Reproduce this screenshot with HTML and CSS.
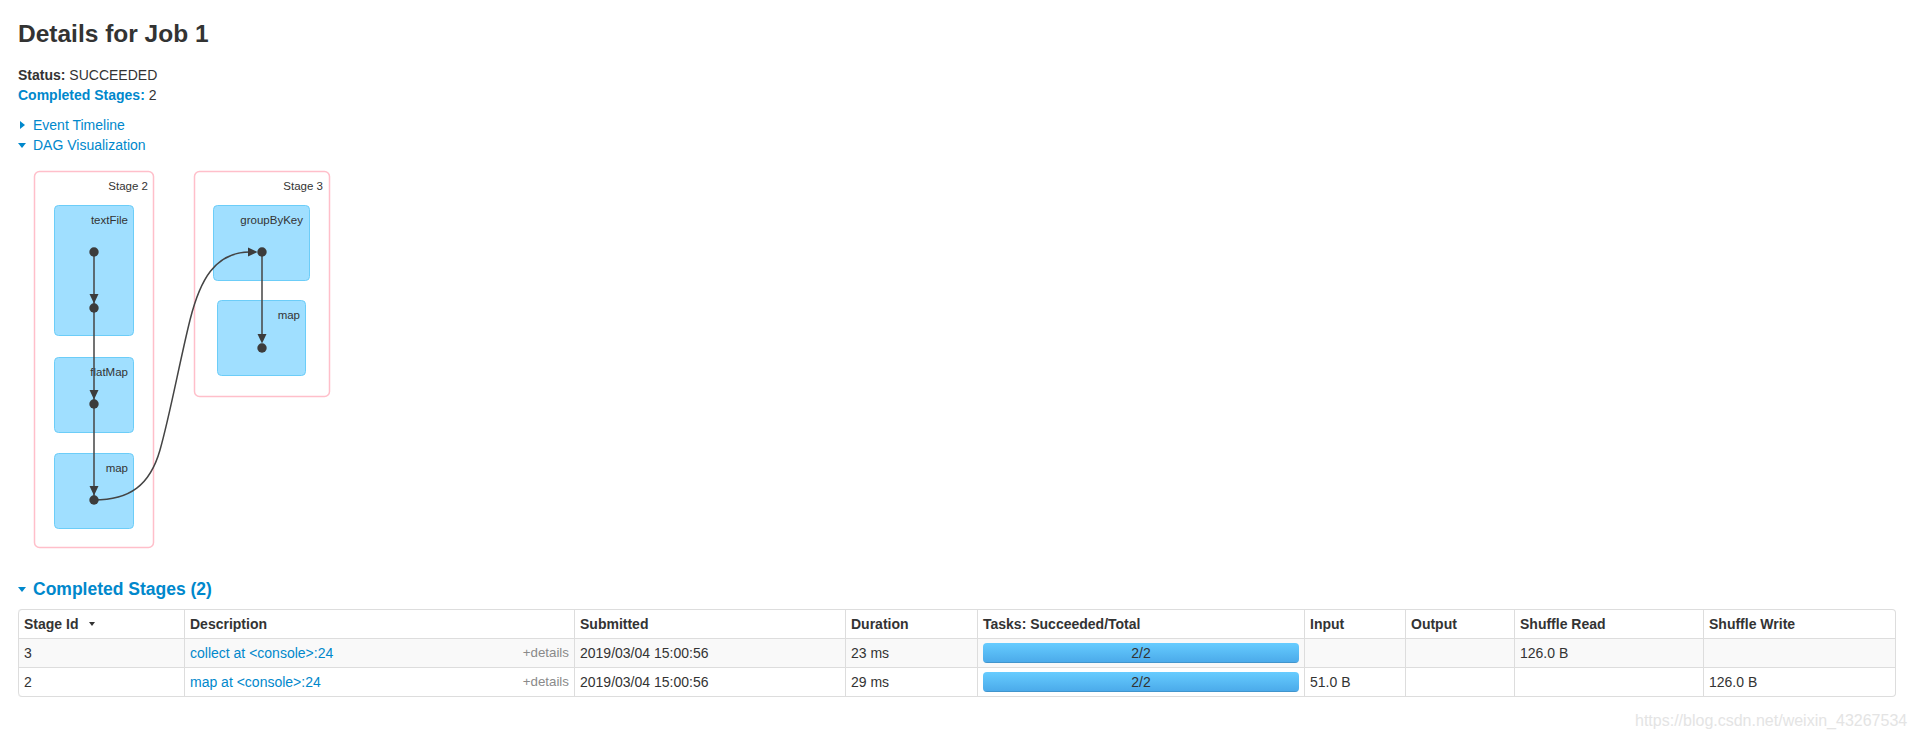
FILE: index.html
```html
<!DOCTYPE html>
<html lang="en">

<head>
    <meta charset="UTF-8">
    <meta name="viewport" content="width=device-width, initial-scale=1.0">
    <title>Details for Job 1</title>
    <link rel="stylesheet" href="styles.css">
</head>

<body>
    <div class="page">
        <h3 class="job-title">Details for Job 1</h3>

        <ul class="summary">
            <li><strong>Status:</strong> SUCCEEDED</li>
            <li><a href="#completed"><strong>Completed Stages:</strong></a> 2</li>
        </ul>

        <div class="toggles">
            <div class="toggle"><span class="arrow arrow-closed"></span><a href="#">Event Timeline</a></div>
            <div class="toggle"><span class="arrow arrow-open"></span><a href="#">DAG Visualization</a></div>
        </div>

        <!-- DAG: coordinates are page pixels, the viewBox starts where the svg sits -->
        <svg class="dag" width="330" height="414" viewBox="18 155 330 414">
            <rect class="stage" x="34.5" y="171.5" width="119" height="376" rx="5" />
            <rect class="stage" x="194.5" y="171.5" width="135" height="225" rx="5" />
            <text class="cluster-label" x="148" y="190">Stage 2</text>
            <text class="cluster-label" x="323" y="190">Stage 3</text>

            <rect class="rdd" x="54.5" y="205.5" width="79" height="130" rx="4" />
            <rect class="rdd" x="54.5" y="357.5" width="79" height="75" rx="4" />
            <rect class="rdd" x="54.5" y="453.5" width="79" height="75" rx="4" />
            <rect class="rdd" x="213.5" y="205.5" width="96" height="75" rx="4" />
            <rect class="rdd" x="217.5" y="300.5" width="88" height="75" rx="4" />
            <text class="cluster-label" x="128" y="224">textFile</text>
            <text class="cluster-label" x="128" y="376">flatMap</text>
            <text class="cluster-label" x="128" y="472">map</text>
            <text class="cluster-label" x="303" y="224">groupByKey</text>
            <text class="cluster-label" x="300" y="319">map</text>

            <path class="edge" d="M94,252 L94,496" />
            <path class="edge" d="M262,252 L262,340" />
            <path class="edge" d="M94,500 C130,500 150,485 160,450 C170,415 180,360 190,320 C200,280 215,252 250,252" />

            <polygon class="head" points="89.5,294 98.5,294 94,303.5" />
            <polygon class="head" points="89.5,390 98.5,390 94,399.5" />
            <polygon class="head" points="89.5,486 98.5,486 94,495.5" />
            <polygon class="head" points="257.5,334 266.5,334 262,343.5" />
            <polygon class="head" points="248,247.5 248,256.5 257.5,252" />

            <circle class="dot" cx="94" cy="252" r="4.7" />
            <circle class="dot" cx="94" cy="308" r="4.7" />
            <circle class="dot" cx="94" cy="404" r="4.7" />
            <circle class="dot" cx="94" cy="500" r="4.7" />
            <circle class="dot" cx="262" cy="252" r="4.7" />
            <circle class="dot" cx="262" cy="348" r="4.7" />
        </svg>

        <h4 class="section-title" id="completed"><span class="arrow arrow-open"></span><a href="#">Completed Stages (2)</a></h4>

        <table class="stages">
            <thead>
                <tr>
                    <th class="col-id">Stage Id<span class="sort-arrow"></span></th>
                    <th class="col-desc">Description</th>
                    <th class="col-submitted">Submitted</th>
                    <th class="col-duration">Duration</th>
                    <th class="col-tasks">Tasks: Succeeded/Total</th>
                    <th class="col-input">Input</th>
                    <th class="col-output">Output</th>
                    <th class="col-read">Shuffle Read</th>
                    <th class="col-write">Shuffle Write</th>
                </tr>
            </thead>
            <tbody>
                <tr>
                    <td>3</td>
                    <td><span class="expand-details">+details</span><a href="#">collect at &lt;console&gt;:24</a></td>
                    <td>2019/03/04 15:00:56</td>
                    <td>23 ms</td>
                    <td>
                        <div class="progress">
                            <span class="progress-text">2/2</span>
                            <div class="bar" style="width: 100%"></div>
                        </div>
                    </td>
                    <td></td>
                    <td></td>
                    <td>126.0 B</td>
                    <td></td>
                </tr>
                <tr>
                    <td>2</td>
                    <td><span class="expand-details">+details</span><a href="#">map at &lt;console&gt;:24</a></td>
                    <td>2019/03/04 15:00:56</td>
                    <td>29 ms</td>
                    <td>
                        <div class="progress">
                            <span class="progress-text">2/2</span>
                            <div class="bar" style="width: 100%"></div>
                        </div>
                    </td>
                    <td>51.0 B</td>
                    <td></td>
                    <td></td>
                    <td>126.0 B</td>
                </tr>
            </tbody>
        </table>
    </div>

    <div class="watermark">https://blog.csdn.net/weixin_43267534</div>
</body>

</html>
```

FILE: styles.css
```css
body {
    margin: 0;
    font-family: "Liberation Sans", Arial, sans-serif;
    font-size: 14px;
    line-height: 20px;
    color: #333;
    background-color: #fff;
}

a {
    color: #0088cc;
    text-decoration: none;
}

.page {
    padding: 0 20px 0 18px;
}

.job-title {
    margin: 14px 0 0;
    font-size: 24.5px;
    line-height: 40px;
    font-weight: bold;
}

.summary {
    list-style: none;
    margin: 11px 0 0;
    padding: 0;
}

.toggles {
    margin-top: 10px;
}

/* collapse arrows */
.arrow {
    display: inline-block;
    width: 0;
    height: 0;
    vertical-align: middle;
    margin-bottom: 2px;
}

.arrow-open {
    border-left: 4px solid transparent;
    border-right: 4px solid transparent;
    border-top: 5px solid #0088cc;
    margin-right: 7px;
}

.arrow-closed {
    border-top: 4px solid transparent;
    border-bottom: 4px solid transparent;
    border-left: 5px solid #0088cc;
    margin-left: 2px;
    margin-right: 8px;
}

/* DAG */
.dag {
    display: block;
}

.dag .stage {
    fill: #fff;
    stroke: #ffbfca;
    stroke-width: 1.5px;
}

.dag .rdd {
    fill: #a0dfff;
    stroke: #6ccdf8;
    stroke-width: 1px;
}

.dag .cluster-label {
    font-family: "Liberation Sans", Arial, sans-serif;
    font-size: 11.5px;
    fill: #333;
    text-anchor: end;
}

.dag .edge {
    fill: none;
    stroke: #444;
    stroke-width: 1.5px;
}

.dag .head,
.dag .dot {
    fill: #3c3c3c;
}

.section-title {
    margin: 10px 0 0;
    font-size: 17.5px;
    line-height: 20px;
    font-weight: bold;
}

.section-title .arrow {
    margin-bottom: 1px;
}

/* stage table */
.stages {
    width: 100%;
    margin-top: 10px;
    table-layout: fixed;
    border-collapse: separate;
    border-spacing: 0;
    border: 1px solid #ddd;
    border-left: 0;
    border-radius: 4px;
}

.stages th,
.stages td {
    box-sizing: border-box;
    padding: 4px 5px;
    line-height: 20px;
    text-align: left;
    vertical-align: top;
    border-left: 1px solid #ddd;
    border-top: 1px solid #ddd;
}

.stages th {
    border-top: 0;
    font-weight: bold;
}

.stages tbody tr:nth-child(odd) td {
    background-color: #f9f9f9;
}

.stages tr:last-child td:first-child {
    border-bottom-left-radius: 4px;
}

.stages tr:first-child th:first-child {
    border-top-left-radius: 4px;
}

.col-id { width: 166px; }
.col-desc { width: 390px; }
.col-submitted { width: 271px; }
.col-duration { width: 132px; }
.col-tasks { width: 327px; }
.col-input { width: 101px; }
.col-output { width: 109px; }
.col-read { width: 189px; }
.col-write { width: 192px; }

.sort-arrow {
    display: inline-block;
    width: 0;
    height: 0;
    margin-left: 11px;
    border-left: 3px solid transparent;
    border-right: 3px solid transparent;
    border-top: 4px solid #333;
    vertical-align: middle;
    margin-bottom: 3px;
}

.expand-details {
    float: right;
    font-size: 13.33px;
    color: #8a8a8a;
}

.progress {
    position: relative;
    height: 20px;
    border-radius: 4px;
    overflow: hidden;
    background-color: #f5f5f5;
}

.progress .bar {
    height: 100%;
    background-image: linear-gradient(to bottom, #66ccff, #4aa9e9);
    box-shadow: inset 0 -1px 0 rgba(0, 0, 0, 0.12);
}

.progress-text {
    position: absolute;
    left: 0;
    right: 0;
    top: 0;
    text-align: center;
    line-height: 20px;
    color: #333;
}

.watermark {
    position: absolute;
    left: 1635px;
    top: 711px;
    font-size: 16px;
    line-height: 20px;
    color: #e4e4e4;
    white-space: nowrap;
}
```
